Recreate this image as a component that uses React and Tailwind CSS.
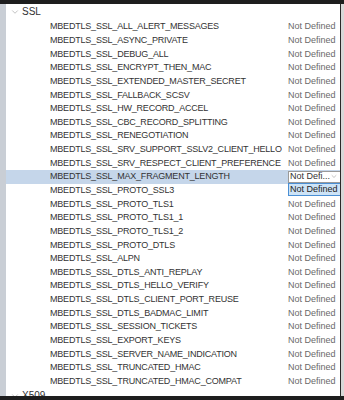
import { ChevronDown } from "lucide-react";

const names = [
  "MBEDTLS_SSL_ALL_ALERT_MESSAGES",
  "MBEDTLS_SSL_ASYNC_PRIVATE",
  "MBEDTLS_SSL_DEBUG_ALL",
  "MBEDTLS_SSL_ENCRYPT_THEN_MAC",
  "MBEDTLS_SSL_EXTENDED_MASTER_SECRET",
  "MBEDTLS_SSL_FALLBACK_SCSV",
  "MBEDTLS_SSL_HW_RECORD_ACCEL",
  "MBEDTLS_SSL_CBC_RECORD_SPLITTING",
  "MBEDTLS_SSL_RENEGOTIATION",
  "MBEDTLS_SSL_SRV_SUPPORT_SSLV2_CLIENT_HELLO",
  "MBEDTLS_SSL_SRV_RESPECT_CLIENT_PREFERENCE",
  "MBEDTLS_SSL_MAX_FRAGMENT_LENGTH",
  "MBEDTLS_SSL_PROTO_SSL3",
  "MBEDTLS_SSL_PROTO_TLS1",
  "MBEDTLS_SSL_PROTO_TLS1_1",
  "MBEDTLS_SSL_PROTO_TLS1_2",
  "MBEDTLS_SSL_PROTO_DTLS",
  "MBEDTLS_SSL_ALPN",
  "MBEDTLS_SSL_DTLS_ANTI_REPLAY",
  "MBEDTLS_SSL_DTLS_HELLO_VERIFY",
  "MBEDTLS_SSL_DTLS_CLIENT_PORT_REUSE",
  "MBEDTLS_SSL_DTLS_BADMAC_LIMIT",
  "MBEDTLS_SSL_SESSION_TICKETS",
  "MBEDTLS_SSL_EXPORT_KEYS",
  "MBEDTLS_SSL_SERVER_NAME_INDICATION",
  "MBEDTLS_SSL_TRUNCATED_HMAC",
  "MBEDTLS_SSL_TRUNCATED_HMAC_COMPAT",
];

const SELECTED = 11;

function Row({ name, index }) {
  const sel = index === SELECTED;
  const covered = index === SELECTED + 1; // the open dropdown lies over this row's value
  return (
    <div className={"relative flex h-[13.65px] shrink-0 items-center " + (sel ? "bg-[#c5d6ea]" : "")}>
      <div className="w-[44px] shrink-0" />
      <div className="w-[238px] shrink-0 whitespace-nowrap overflow-hidden tracking-[-0.2px] text-[#333]">{name}</div>
      {sel ? (
        <>
          <div className="flex h-[12px] w-[53px] shrink-0 items-center justify-between border border-[#9a9a9a] bg-white pl-[1px] pr-[2px] text-[#333]">
            <span className="whitespace-nowrap">Not Defi...</span>
            <ChevronDown size={9} strokeWidth={1.5} className="text-[#888]" />
          </div>
          <div className="absolute left-[282px] top-[13px] z-10 flex h-[13px] w-[55px] items-center whitespace-nowrap border border-[#4a8fd4] bg-[#cde3f6] pl-[1px] text-[#222]">
            Not Defined
          </div>
        </>
      ) : covered ? null : (
        <div className="whitespace-nowrap text-[#6a6a6a]">Not Defined</div>
      )}
    </div>
  );
}

function Group({ label }) {
  return (
    <div className="flex h-[16px] shrink-0 items-center pl-[4px] text-[10px] text-[#333]">
      <ChevronDown size={10} strokeWidth={1.25} className="mr-[2px] text-[#8a8a8a]" />
      {label}
    </div>
  );
}

export default function App() {
  return (
    <div
      className="flex h-[400px] w-[344px] flex-col overflow-hidden bg-[#1e1e1e] text-[9px] leading-none"
      style={{ fontFamily: '"Liberation Sans", Arial, sans-serif' }}
    >
      <div className="h-[4px] shrink-0 bg-[#1e1e1e]" />
      <div className="flex min-h-0 flex-1 overflow-hidden">
        <div className="w-[6px] shrink-0 bg-[#c9ced5]" />
        <div className="flex min-h-0 flex-1 flex-col overflow-hidden bg-white">
          <Group label="SSL" />
          {names.map((n, i) => (
            <Row key={n} name={n} index={i} />
          ))}
          <Group label="X509" />
        </div>
        <div className="w-[1px] shrink-0 bg-[#2a2a2a]" />
        <div className="w-[3px] shrink-0 bg-[#d8d8d8]" />
      </div>
      <div className="h-[4px] shrink-0 bg-[#1e1e1e]" />
    </div>
  );
}
